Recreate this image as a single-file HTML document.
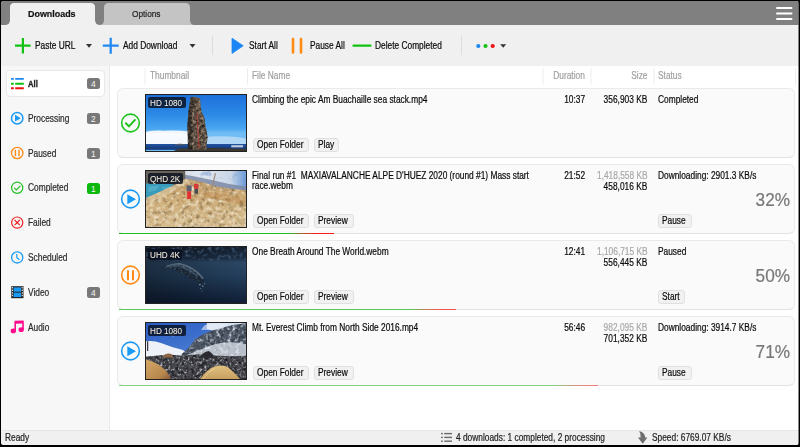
<!DOCTYPE html>
<html><head><meta charset="utf-8"><style>
*{margin:0;padding:0;box-sizing:border-box}
html,body{width:800px;height:447px;overflow:hidden;background:#000}
body{position:relative;font-family:"Liberation Sans",sans-serif}
.t{position:absolute;white-space:nowrap;-webkit-text-stroke-width:0.2px}
.a{position:absolute}
svg{position:absolute;overflow:visible}
.btn{position:absolute;height:14px;background:#f1f1f1;border:1px solid #e0e0e0;border-radius:3px}
.card{position:absolute;left:117px;width:678px;height:70px;background:#fafafa;border:1px solid #eaeaea;border-bottom-color:#e2e2e2;border-radius:6px}
.badge{position:absolute;left:87px;width:12.6px;height:11.2px;border-radius:2.5px;background:#787878;color:#f4f4f4;font-size:8.4px;line-height:12.4px;text-align:center}
</style></head><body>
<div class="a" style="left:1px;top:1px;width:797.5px;height:444px;background:#f0f0f0;border-radius:3px;overflow:hidden"></div>
<svg class="a" style="left:0;top:0" width="800" height="30" viewBox="0 0 800 30"><path d="M1,4 Q1,1 4,1 L795.5,1 Q798.5,1 798.5,4 L798.5,25 L1,25 Z" fill="#808080"/><path d="M5.2,25 Q10,25 10,20.2 L10,7.5 Q10,3 14.5,3 L90.5,3 Q95,3 95,7.5 L95,20.2 Q95,25 99.8,25 Z" fill="#c4c4c4"/><path d="M99.2,25 Q104,25 104,20.2 L104,7.5 Q104,3 108.5,3 L185.5,3 Q190,3 190,7.5 L190,20.2 Q190,25 194.8,25 Z" fill="#c4c4c4"/><path d="M5.2,25 Q10,25 10,20.2 L10,7.5 Q10,3 14.5,3 L90.5,3 Q95,3 95,7.5 L95,20.2 Q95,25 99.8,25 Z" fill="#f0f0f0"/><rect x="1" y="25" width="797.5" height="3" fill="#f0f0f0"/><line x1="777" y1="8" x2="791.5" y2="8" stroke="#fff" stroke-width="2" stroke-linecap="round"/><line x1="777" y1="13.5" x2="791.5" y2="13.5" stroke="#fff" stroke-width="2" stroke-linecap="round"/><line x1="777" y1="19" x2="791.5" y2="19" stroke="#fff" stroke-width="2" stroke-linecap="round"/></svg>
<div class="t" style="left:27.9px;transform-origin:0 50%;transform:scaleX(0.97);top:9.00px;font-size:9.2px;line-height:10px;color:#111;font-weight:bold;letter-spacing:0px;">Downloads</div>
<div class="t" style="left:132px;transform-origin:0 50%;transform:scaleX(0.86);top:8.00px;font-size:9.6px;line-height:11px;color:#222;font-weight:normal;letter-spacing:0px;">Options</div>
<svg class="a" style="left:0;top:0" width="800" height="70" viewBox="0 0 800 70"><path d="M15,45.7 H30.6 M22.9,38 V53.5" stroke="#13c113" stroke-width="2.2"/><path d="M86,44 L92,44 L89,47.8 Z" fill="#333"/><path d="M102.8,45.7 H118.7 M110.7,37.8 V53.7" stroke="#1e88f0" stroke-width="2.2"/><path d="M189.5,44 L195.5,44 L192.5,47.8 Z" fill="#333"/><line x1="212.5" y1="36" x2="212.5" y2="55" stroke="#dcdcdc" stroke-width="1"/><path d="M232,38.2 L243.2,45.8 L232,53.4 Z" fill="#1a86f5" stroke="#1a86f5" stroke-width="0.8" stroke-linejoin="round"/><path d="M293,39 V52.5 M301,39 V52.5" stroke="#ff8a14" stroke-width="2.6" stroke-linecap="round"/><line x1="353.5" y1="45.7" x2="370.5" y2="45.7" stroke="#13c113" stroke-width="2.2" stroke-linecap="round"/><line x1="461.5" y1="36" x2="461.5" y2="55" stroke="#dcdcdc" stroke-width="1"/><circle cx="478.3" cy="46" r="2.1" fill="#1e88f0"/><circle cx="485.5" cy="46" r="2.1" fill="#13c113"/><circle cx="492.7" cy="46" r="2.1" fill="#f01010"/><path d="M500.2,44.2 L506.2,44.2 L503.2,47.7 Z" fill="#333"/></svg>
<div class="t" style="left:35px;transform-origin:0 50%;transform:scaleX(0.835);top:40.00px;font-size:10px;line-height:11px;color:#0a0a0a;font-weight:normal;letter-spacing:0px;">Paste URL</div>
<div class="t" style="left:122.7px;transform-origin:0 50%;transform:scaleX(0.835);top:40.00px;font-size:10px;line-height:11px;color:#0a0a0a;font-weight:normal;letter-spacing:0px;">Add Download</div>
<div class="t" style="left:248.8px;transform-origin:0 50%;transform:scaleX(0.835);top:40.00px;font-size:10px;line-height:11px;color:#0a0a0a;font-weight:normal;letter-spacing:0px;">Start All</div>
<div class="t" style="left:309.7px;transform-origin:0 50%;transform:scaleX(0.835);top:40.00px;font-size:10px;line-height:11px;color:#0a0a0a;font-weight:normal;letter-spacing:0px;">Pause All</div>
<div class="t" style="left:374.5px;transform-origin:0 50%;transform:scaleX(0.835);top:40.00px;font-size:10px;line-height:11px;color:#0a0a0a;font-weight:normal;letter-spacing:0px;">Delete Completed</div>
<div class="a" style="left:798px;top:1px;width:1px;height:444px;background:rgba(0,0,0,0.45);z-index:5"></div>
<div class="a" style="left:1px;top:65.5px;width:109px;height:364.5px;background:#f7f7f7;border-right:1px solid #e9e9e9"></div>
<div class="a" style="left:110px;top:65.5px;width:688.5px;height:364.5px;background:#fff"></div>
<div class="a" style="left:1px;top:430px;width:797.5px;height:15px;background:#f0f0f0;border-top:1px solid #e6e6e6;border-radius:0 0 3px 3px"></div>
<div class="a" style="left:5.5px;top:70px;width:99px;height:27px;background:#fff;border:1px solid #e8e8e8;border-radius:4px"></div>
<div class="t" style="left:28px;transform-origin:0 50%;transform:scaleX(0.8);top:78.00px;font-size:9.6px;line-height:11px;color:#222;font-weight:bold;letter-spacing:0px;-webkit-text-stroke-width:0.35px">All</div>
<div class="t" style="left:28px;transform-origin:0 50%;transform:scaleX(0.835);top:113.00px;font-size:10px;line-height:11px;color:#2a2a2a;font-weight:normal;letter-spacing:0px;">Processing</div>
<div class="t" style="left:28px;transform-origin:0 50%;transform:scaleX(0.835);top:148.00px;font-size:10px;line-height:11px;color:#2a2a2a;font-weight:normal;letter-spacing:0px;">Paused</div>
<div class="t" style="left:28px;transform-origin:0 50%;transform:scaleX(0.835);top:182.00px;font-size:10px;line-height:11px;color:#2a2a2a;font-weight:normal;letter-spacing:0px;">Completed</div>
<div class="t" style="left:28px;transform-origin:0 50%;transform:scaleX(0.835);top:217.00px;font-size:10px;line-height:11px;color:#2a2a2a;font-weight:normal;letter-spacing:0px;">Failed</div>
<div class="t" style="left:28px;transform-origin:0 50%;transform:scaleX(0.835);top:252.00px;font-size:10px;line-height:11px;color:#2a2a2a;font-weight:normal;letter-spacing:0px;">Scheduled</div>
<div class="t" style="left:28px;transform-origin:0 50%;transform:scaleX(0.835);top:287.00px;font-size:10px;line-height:11px;color:#2a2a2a;font-weight:normal;letter-spacing:0px;">Video</div>
<div class="t" style="left:28px;transform-origin:0 50%;transform:scaleX(0.835);top:322.00px;font-size:10px;line-height:11px;color:#2a2a2a;font-weight:normal;letter-spacing:0px;">Audio</div>
<div class="badge" style="top:78.10px;background:#787878">4</div>
<div class="badge" style="top:112.90px;background:#787878">2</div>
<div class="badge" style="top:147.70px;background:#787878">1</div>
<div class="badge" style="top:182.50px;background:#0cb80c">1</div>
<div class="badge" style="top:286.90px;background:#787878">4</div>
<svg class="a" style="left:0;top:0" width="110" height="440" viewBox="0 0 110 440"><path d="M11,78.90 H13.8 M15.2,78.90 H23.8" stroke="#1e88f0" stroke-width="1.9"/><path d="M11,83.70 H13.8 M15.2,83.70 H23.8" stroke="#13c113" stroke-width="1.9"/><path d="M11,88.30 H13.8 M15.2,88.30 H23.8" stroke="#f01010" stroke-width="1.9"/><circle cx="17.2" cy="118.20" r="5.7" fill="none" stroke="#1a9af5" stroke-width="1.5"/><path d="M15,114.80 L20.8,118.20 L15,121.60 Z" fill="#1a9af5"/><circle cx="17.2" cy="153.00" r="5.7" fill="none" stroke="#ff8a14" stroke-width="1.3"/><path d="M15.4,149.80 V156.20 M19,149.80 V156.20" stroke="#ff8a14" stroke-width="1.4"/><circle cx="17.2" cy="187.80" r="5.6" fill="none" stroke="#22c022" stroke-width="1.2"/><path d="M14.2,187.80 L16.4,190.00 L20.4,185.80" fill="none" stroke="#22c022" stroke-width="1.2"/><circle cx="17.2" cy="222.60" r="5.6" fill="none" stroke="#f02020" stroke-width="1.2"/><path d="M14.6,220.00 L19.8,225.20 M19.8,220.00 L14.6,225.20" stroke="#f02020" stroke-width="1.2"/><circle cx="17.2" cy="257.40" r="5.6" fill="none" stroke="#1a9af5" stroke-width="1.3"/><path d="M16.8,253.90 V257.70 L19.5,259.80" fill="none" stroke="#1a9af5" stroke-width="1.2"/><rect x="11.2" y="286.20" width="12.3" height="12" fill="#222"/><rect x="13.6" y="287.40" width="7.5" height="4.3" fill="#1a9af5"/><rect x="13.6" y="292.70" width="7.5" height="4.3" fill="#1a9af5"/><rect x="11.8" y="287.00" width="1.2" height="1.4" fill="#ddd"/><rect x="21.7" y="287.00" width="1.2" height="1.4" fill="#ddd"/><rect x="11.8" y="289.60" width="1.2" height="1.4" fill="#ddd"/><rect x="21.7" y="289.60" width="1.2" height="1.4" fill="#ddd"/><rect x="11.8" y="292.20" width="1.2" height="1.4" fill="#ddd"/><rect x="21.7" y="292.20" width="1.2" height="1.4" fill="#ddd"/><rect x="11.8" y="294.80" width="1.2" height="1.4" fill="#ddd"/><rect x="21.7" y="294.80" width="1.2" height="1.4" fill="#ddd"/><path d="M14.4,321.40 Q14.4,320.80 15,320.80 L23.2,320.60 Q23.8,320.60 23.8,321.20 L23.8,329.60 L22.2,329.60 L22.2,323.60 L16,323.80 L16,330.80 L14.4,330.80 Z" fill="#ff0c8c"/><ellipse cx="13.3" cy="330.90" rx="2.7" ry="2.4" fill="#ff0c8c"/><ellipse cx="21.2" cy="329.70" rx="2.7" ry="2.4" fill="#ff0c8c"/></svg>
<svg class="a" style="left:0;top:0" width="800" height="100" viewBox="0 0 800 100"><line x1="145" y1="68" x2="145" y2="84.5" stroke="#ededed" stroke-width="1"/><line x1="247.5" y1="68" x2="247.5" y2="84.5" stroke="#ededed" stroke-width="1"/><line x1="543" y1="68" x2="543" y2="84.5" stroke="#ededed" stroke-width="1"/><line x1="591" y1="68" x2="591" y2="84.5" stroke="#ededed" stroke-width="1"/><line x1="654" y1="68" x2="654" y2="84.5" stroke="#ededed" stroke-width="1"/><line x1="795.5" y1="68" x2="795.5" y2="84.5" stroke="#ededed" stroke-width="1"/></svg>
<div class="t" style="left:149.5px;transform-origin:0 50%;transform:scaleX(0.835);top:70.00px;font-size:10px;line-height:11px;color:#a0a0a0;font-weight:normal;letter-spacing:0px;">Thumbnail</div>
<div class="t" style="left:252px;transform-origin:0 50%;transform:scaleX(0.835);top:70.00px;font-size:10px;line-height:11px;color:#a0a0a0;font-weight:normal;letter-spacing:0px;">File Name</div>
<div class="t" style="right:215.20000000000005px;text-align:right;transform-origin:100% 50%;transform:scaleX(0.835);top:70.00px;font-size:10px;line-height:11px;color:#a0a0a0;font-weight:normal;letter-spacing:0px;">Duration</div>
<div class="t" style="right:152.20000000000005px;text-align:right;transform-origin:100% 50%;transform:scaleX(0.835);top:70.00px;font-size:10px;line-height:11px;color:#a0a0a0;font-weight:normal;letter-spacing:0px;">Size</div>
<div class="t" style="left:657.7px;transform-origin:0 50%;transform:scaleX(0.835);top:70.00px;font-size:10px;line-height:11px;color:#a0a0a0;font-weight:normal;letter-spacing:0px;">Status</div>
<div class="card" style="top:88px"></div>
<svg class="a" style="left:0;top:0" width="800" height="447" viewBox="0 0 800 447"><circle cx="130.5" cy="123.0" r="8.85" fill="none" stroke="#1ec41e" stroke-width="1.6"/><path d="M125.3,122.8 L129.0,126.3 L135.4,119.3" fill="none" stroke="#1ec41e" stroke-width="2"/></svg>
<div class="a" style="left:145px;top:94px;width:102px;height:58px;background:#222;overflow:hidden"><div class="a" style="left:1px;top:1px;width:100px;height:56px;overflow:hidden"><svg width="100" height="56" viewBox="0 0 102 58" preserveAspectRatio="none" style="position:absolute;left:0;top:0"><defs>
<linearGradient id="s1" x1="0" y1="0" x2="0" y2="1"><stop offset="0" stop-color="#1e70dc"/><stop offset="0.35" stop-color="#2c8ae6"/><stop offset="0.6" stop-color="#4aa6f0"/><stop offset="0.68" stop-color="#70bcf4"/></linearGradient>
<linearGradient id="c1" x1="0" y1="0" x2="0" y2="1"><stop offset="0" stop-color="#f4f8ff"/><stop offset="1" stop-color="#d4e6f6"/></linearGradient>
<linearGradient id="r1" x1="0" y1="0" x2="1" y2="0"><stop offset="0" stop-color="#3a322c"/><stop offset="0.55" stop-color="#6a5a4c"/><stop offset="1" stop-color="#4a4038"/></linearGradient>
<filter id="n1" x="0" y="0" width="100%" height="100%" color-interpolation-filters="sRGB"><feTurbulence type="fractalNoise" baseFrequency="0.3" numOctaves="2" seed="5" result="t"/><feColorMatrix in="t" type="matrix" values="0 0 0 0 0.7 0 0 0 0 0.62 0 0 0 0 0.52 2.6 0 0 0 -1.15" result="c"/><feComposite in="c" in2="SourceGraphic" operator="in"/></filter><filter id="n1b" x="0" y="0" width="100%" height="100%" color-interpolation-filters="sRGB"><feTurbulence type="fractalNoise" baseFrequency="0.35" numOctaves="2" seed="9" result="t"/><feColorMatrix in="t" type="matrix" values="0 0 0 0 0.08 0 0 0 0 0.07 0 0 0 0 0.06 2.4 0 0 0 -1.1" result="c"/><feComposite in="c" in2="SourceGraphic" operator="in"/></filter>
</defs>
<rect width="102" height="58" fill="url(#s1)"/>
<path d="M0,38 Q8,36.5 18,37 Q30,36 46,38 L46,51 L0,51 Z" fill="url(#c1)"/>
<path d="M0,40 Q20,38.5 46,40.5 L46,50.8 L0,50.8 Z" fill="#fbfdff" opacity="0.8"/>
<path d="M56,44 Q70,42 84,43 Q95,43.5 102,45 L102,51 L56,51 Z" fill="#dce9f6" opacity="0.6"/>
<rect y="50.8" width="102" height="6" fill="#1e4c98"/>
<rect y="53.5" width="102" height="3" fill="#18407e"/>
<path d="M28,52 Q32,50.3 36,50.6 Q39,51 42,52 Z" fill="#505a66"/>
<path d="M28,58 L34,55.5 L70,55 L102,56 L102,58 Z" fill="#3e3832"/>
<path d="M45.6,2.1 Q50,1.3 55.2,3.5 Q55.4,8 55.9,11.8 Q56.3,15.5 57.2,18.7 Q59.5,22 60,25.7 Q60.2,29 60.7,32.7 Q62.5,38 62.7,43.8 Q62.6,47 62,50.8 L61.6,56.5 L42.9,56.5 Q42.6,48 42.6,39.7 Q42,36 42.2,32.7 Q42.6,25 43.2,18.7 Q43.5,15 44,11.8 Q44.5,9 45.6,2.1 Z" fill="url(#r1)"/>
<path d="M45.6,2.1 Q50,1.3 55.2,3.5 Q55.4,8 55.9,11.8 Q56.3,15.5 57.2,18.7 Q59.5,22 60,25.7 Q60.2,29 60.7,32.7 Q62.5,38 62.7,43.8 Q62.6,47 62,50.8 L61.6,56.5 L42.9,56.5 Q42.6,48 42.6,39.7 Q42,36 42.2,32.7 Q42.6,25 43.2,18.7 Q43.5,15 44,11.8 Q44.5,9 45.6,2.1 Z" fill="#000" filter="url(#n1)"/>
<path d="M45.6,2.1 Q50,1.3 55.2,3.5 Q55.4,8 55.9,11.8 Q56.3,15.5 57.2,18.7 Q59.5,22 60,25.7 Q60.2,29 60.7,32.7 Q62.5,38 62.7,43.8 Q62.6,47 62,50.8 L61.6,56.5 L42.9,56.5 Q42.6,48 42.6,39.7 Q42,36 42.2,32.7 Q42.6,25 43.2,18.7 Q43.5,15 44,11.8 Q44.5,9 45.6,2.1 Z" fill="#000" filter="url(#n1b)"/>
<path d="M52.4,18.7 Q51.5,24 53,29 Q52,34 53.5,39 Q52.8,45 54,49 L53.9,55" fill="none" stroke="#c83434" stroke-width="0.8"/><path d="M42.9,56.5 L42.6,39.7 L42.2,32.7 L43.2,18.7 L45.6,2.1 L49,2 L47,20 L46,40 L47,56.5 Z" fill="#1a1614" opacity="0.35"/>
<rect x="87" y="52" width="12" height="2.2" fill="#e8eef8" opacity="0.8"/>
</svg></div></div>
<div class="a" style="left:148.1px;top:97.10px;width:37.5px;height:10.6px;background:rgba(10,16,32,0.82);border-radius:2px"></div>
<div class="t" style="left:149.6px;transform-origin:0 50%;transform:scaleX(0.84);top:97.00px;font-size:9.7px;line-height:11px;color:#f2ecdc;font-weight:normal;letter-spacing:0px;-webkit-text-stroke-width:0.05px">HD 1080</div>
<div class="t" style="left:252px;transform-origin:0 50%;transform:scaleX(0.835);top:94.00px;font-size:10px;line-height:11px;color:#0a0a0a;font-weight:normal;letter-spacing:0px;">Climbing the epic Am Buachaille sea stack.mp4</div>
<div class="t" style="right:215px;text-align:right;transform-origin:100% 50%;transform:scaleX(0.835);top:94.00px;font-size:10px;line-height:11px;color:#0a0a0a;font-weight:normal;letter-spacing:0px;">10:37</div>
<div class="t" style="right:152.39999999999998px;text-align:right;transform-origin:100% 50%;transform:scaleX(0.835);top:94.00px;font-size:10px;line-height:11px;color:#0a0a0a;font-weight:normal;letter-spacing:0px;">356,903 KB</div>
<div class="t" style="left:657.7px;transform-origin:0 50%;transform:scaleX(0.835);top:94.00px;font-size:10px;line-height:11px;color:#0a0a0a;font-weight:normal;letter-spacing:0px;">Completed</div>
<div class="btn" style="left:252.5px;top:137.50px;width:56px"></div>
<div class="t" style="left:256.9px;transform-origin:0 50%;transform:scaleX(0.835);top:139.00px;font-size:10px;line-height:11px;color:#0a0a0a;font-weight:normal;letter-spacing:0px;">Open Folder</div>
<div class="btn" style="left:314.2px;top:137.50px;width:24.4px"></div>
<div class="t" style="left:318.3px;transform-origin:0 50%;transform:scaleX(0.835);top:139.00px;font-size:10px;line-height:11px;color:#0a0a0a;font-weight:normal;letter-spacing:0px;">Play</div>
<div class="card" style="top:164px"></div>
<svg class="a" style="left:0;top:0" width="800" height="447" viewBox="0 0 800 447"><circle cx="130.5" cy="199.0" r="8.85" fill="none" stroke="#1a9af5" stroke-width="1.6"/><path d="M127.3,194.3 L136.0,199.3 L127.3,204.2 Z" fill="#1a9af5"/></svg>
<div class="a" style="left:145px;top:170px;width:102px;height:58px;background:#222;overflow:hidden"><div class="a" style="left:1px;top:1px;width:100px;height:56px;overflow:hidden"><svg width="100" height="56" viewBox="0 0 102 58" preserveAspectRatio="none" style="position:absolute;left:0;top:0"><defs>
<linearGradient id="s2" x1="0" y1="0" x2="1" y2="0"><stop offset="0" stop-color="#c0ccd8"/><stop offset="0.55" stop-color="#e2e8f0"/><stop offset="0.85" stop-color="#c8d6e6"/><stop offset="1" stop-color="#6a9ad8"/></linearGradient>
<linearGradient id="g2" x1="0" y1="0" x2="0" y2="1"><stop offset="0" stop-color="#b89464"/><stop offset="0.35" stop-color="#ccaa74"/><stop offset="1" stop-color="#d6bc90"/></linearGradient>
<filter id="n2" x="0" y="0" width="100%" height="100%" color-interpolation-filters="sRGB"><feTurbulence type="fractalNoise" baseFrequency="0.22" numOctaves="2" seed="3" result="t"/><feColorMatrix in="t" type="matrix" values="0 0 0 0 0.48 0 0 0 0 0.38 0 0 0 0 0.24 2.4 0 0 0 -1.25" result="c"/><feComposite in="c" in2="SourceGraphic" operator="in"/></filter><filter id="n2b" x="0" y="0" width="100%" height="100%" color-interpolation-filters="sRGB"><feTurbulence type="fractalNoise" baseFrequency="0.24" numOctaves="2" seed="11" result="t"/><feColorMatrix in="t" type="matrix" values="0 0 0 0 0.93 0 0 0 0 0.88 0 0 0 0 0.78 2.6 0 0 0 -1.2" result="c"/><feComposite in="c" in2="SourceGraphic" operator="in"/></filter><filter id="n2c" x="0" y="0" width="100%" height="100%" color-interpolation-filters="sRGB"><feTurbulence type="fractalNoise" baseFrequency="0.15" numOctaves="2" seed="17" result="t"/><feColorMatrix in="t" type="matrix" values="0 0 0 0 0.45 0 0 0 0 0.6 0 0 0 0 0.8 2.2 0 0 0 -1.2" result="c"/><feComposite in="c" in2="SourceGraphic" operator="in"/></filter><filter id="n2d" x="0" y="0" width="100%" height="100%" color-interpolation-filters="sRGB"><feTurbulence type="fractalNoise" baseFrequency="0.12" numOctaves="2" seed="23" result="t"/><feColorMatrix in="t" type="matrix" values="0 0 0 0 0.55 0 0 0 0 0.5 0 0 0 0 0.32 2.2 0 0 0 -1.3" result="c"/><feComposite in="c" in2="SourceGraphic" operator="in"/></filter>
</defs>
<rect width="102" height="58" fill="url(#g2)"/>
<rect width="102" height="24" fill="url(#s2)"/>
<rect width="102" height="24" fill="#000" filter="url(#n2c)"/>
<path d="M34,3 Q50,5 66,9 Q84,14 102,16 L102,24 L34,20 Z" fill="#7e8aa6" opacity="0.85"/>
<path d="M0,0 L40,0 L40,14 L0,16 Z" fill="#68645c"/>
<path d="M0,13 Q10,12.5 26,13.5 Q30,15 32,17 Q20,24 8,27 L0,29 Z" fill="#3a9cbc"/>
<path d="M3,16 L14,15 L10,20 L2,22 Z M16,17 L24,16 L20,21 Z" fill="#5ab4cc" opacity="0.7"/>
<path d="M0,28 Q14,22 30,14 Q36,9 42,8 Q60,12 72,16 Q88,19 102,20 L102,58 L0,58 Z" fill="url(#g2)"/>
<path d="M0,28 Q14,22 30,14 Q36,9 42,8 Q60,12 72,16 Q88,19 102,20 L102,58 L0,58 Z" fill="#000" filter="url(#n2d)" opacity="0.6"/>
<path d="M0,28 Q14,22 30,14 Q36,9 42,8 Q60,12 72,16 Q88,19 102,20 L102,58 L0,58 Z" fill="#000" filter="url(#n2)"/>
<path d="M0,28 Q14,22 30,14 Q36,9 42,8 Q60,12 72,16 Q88,19 102,20 L102,58 L0,58 Z" fill="#000" filter="url(#n2b)"/>
<path d="M0,28 Q14,22 30,14 Q36,9 42,8 L44,12 Q34,16 26,22 Q12,30 0,34 Z" fill="#e2d2b0" opacity="0.5"/>
<path d="M60,21 Q80,23 102,28 L102,36 Q80,31 58,26 Z" fill="#b8844c" opacity="0.4"/>
<rect x="68.5" y="2" width="1.2" height="17" fill="#9a8a78" transform="rotate(12 69 10)"/>
<rect x="41.5" y="15" width="5" height="6" fill="#5a6070"/>
<rect x="42" y="21" width="4" height="8" fill="#e03030"/>
<rect x="49" y="13.5" width="4.5" height="5" fill="#d83838"/>
<rect x="49.5" y="18.5" width="3.5" height="5" fill="#484850"/>
</svg></div></div>
<div class="a" style="left:148.1px;top:173.10px;width:34.5px;height:10.6px;background:rgba(10,16,32,0.82);border-radius:2px"></div>
<div class="t" style="left:149.6px;transform-origin:0 50%;transform:scaleX(0.84);top:173.00px;font-size:9.7px;line-height:11px;color:#f2ecdc;font-weight:normal;letter-spacing:0px;-webkit-text-stroke-width:0.05px">QHD 2K</div>
<div class="t" style="left:252px;transform-origin:0 50%;transform:scaleX(0.835);top:170.00px;font-size:10px;line-height:11px;color:#0a0a0a;font-weight:normal;letter-spacing:0px;">Final run #1&nbsp; MAXIAVALANCHE ALPE D'HUEZ 2020 (round #1) Mass start</div>
<div class="t" style="left:252px;transform-origin:0 50%;transform:scaleX(0.835);top:180.00px;font-size:10px;line-height:11px;color:#0a0a0a;font-weight:normal;letter-spacing:0px;">race.webm</div>
<div class="t" style="right:215px;text-align:right;transform-origin:100% 50%;transform:scaleX(0.835);top:170.00px;font-size:10px;line-height:11px;color:#0a0a0a;font-weight:normal;letter-spacing:0px;">21:52</div>
<div class="t" style="right:152.39999999999998px;text-align:right;transform-origin:100% 50%;transform:scaleX(0.835);top:170.00px;font-size:10px;line-height:11px;color:#a8a8a8;font-weight:normal;letter-spacing:0px;">1,418,558 KB</div>
<div class="t" style="right:152.39999999999998px;text-align:right;transform-origin:100% 50%;transform:scaleX(0.835);top:181.00px;font-size:10px;line-height:11px;color:#0a0a0a;font-weight:normal;letter-spacing:0px;">458,016 KB</div>
<div class="t" style="left:657.7px;transform-origin:0 50%;transform:scaleX(0.835);top:170.00px;font-size:10px;line-height:11px;color:#0a0a0a;font-weight:normal;letter-spacing:0px;">Downloading: 2901.3 KB/s</div>
<div class="btn" style="left:252.5px;top:213.50px;width:56px"></div>
<div class="t" style="left:256.9px;transform-origin:0 50%;transform:scaleX(0.835);top:215.00px;font-size:10px;line-height:11px;color:#0a0a0a;font-weight:normal;letter-spacing:0px;">Open Folder</div>
<div class="btn" style="left:314.2px;top:213.50px;width:40px"></div>
<div class="t" style="left:318.3px;transform-origin:0 50%;transform:scaleX(0.835);top:215.00px;font-size:10px;line-height:11px;color:#0a0a0a;font-weight:normal;letter-spacing:0px;">Preview</div>
<div class="btn" style="left:657.7px;top:213.50px;width:34.7px"></div>
<div class="t" style="left:661.8px;transform-origin:0 50%;transform:scaleX(0.835);top:215.00px;font-size:10px;line-height:11px;color:#0a0a0a;font-weight:normal;letter-spacing:0px;">Pause</div>
<div class="t" style="right:9.700000000000045px;text-align:right;transform-origin:100% 50%;transform:scaleX(0.955);top:190.00px;font-size:18px;line-height:20px;color:#777;font-weight:normal;letter-spacing:0px;">32%</div>
<div class="a" style="left:119px;top:232.80px;width:215.14px;height:1.7px;opacity:1.0;background:linear-gradient(to left,#ff1a1a 0,#ff1a1a 16px,#b05a2a 31.0px,#20c020 46px,#20c020 100%)"></div>
<div class="card" style="top:240px"></div>
<svg class="a" style="left:0;top:0" width="800" height="447" viewBox="0 0 800 447"><circle cx="130.5" cy="275.0" r="8.85" fill="none" stroke="#ff8a14" stroke-width="1.6"/><path d="M128.0,270.3 V280.2 M133.0,270.3 V280.2" stroke="#ff8a14" stroke-width="2"/></svg>
<div class="a" style="left:145px;top:246px;width:102px;height:58px;background:#222;overflow:hidden"><div class="a" style="left:1px;top:1px;width:100px;height:56px;overflow:hidden"><svg width="100" height="56" viewBox="0 0 102 58" preserveAspectRatio="none" style="position:absolute;left:0;top:0"><defs>
<linearGradient id="w3" x1="0" y1="0" x2="0" y2="1"><stop offset="0" stop-color="#142030"/><stop offset="0.2" stop-color="#1c2e44"/><stop offset="0.27" stop-color="#2c4866"/><stop offset="0.5" stop-color="#24405e"/><stop offset="1" stop-color="#101e36"/></linearGradient>
<linearGradient id="wl3" x1="0" y1="0" x2="1" y2="0"><stop offset="0" stop-color="#000" stop-opacity="0.35"/><stop offset="1" stop-color="#000" stop-opacity="0"/></linearGradient>
<filter id="n3" x="0" y="0" width="100%" height="100%" color-interpolation-filters="sRGB"><feTurbulence type="fractalNoise" baseFrequency="0.25" numOctaves="2" seed="7" result="t"/><feColorMatrix in="t" type="matrix" values="0 0 0 0 0.3 0 0 0 0 0.42 0 0 0 0 0.56 2.2 0 0 0 -1.1" result="c"/><feComposite in="c" in2="SourceGraphic" operator="in"/></filter><filter id="n3b" x="0" y="0" width="100%" height="100%" color-interpolation-filters="sRGB"><feTurbulence type="fractalNoise" baseFrequency="0.45" numOctaves="2" seed="13" result="t"/><feColorMatrix in="t" type="matrix" values="0 0 0 0 0.6 0 0 0 0 0.72 0 0 0 0 0.82 2.4 0 0 0 -1.25" result="c"/><feComposite in="c" in2="SourceGraphic" operator="in"/></filter>
</defs>
<rect width="102" height="58" fill="url(#w3)"/>
<rect width="102" height="58" fill="url(#wl3)"/>
<rect width="102" height="14" fill="#000" filter="url(#n3)"/>
<path d="M15.5,20.8 L22,19.8 Q28,16 34,16.5 Q44,19 51,24.5 Q58,30 59,34 Q58.5,37.5 55,37 Q46,33.5 39,29 Q31,24 24,21.5 L16,22 Z" fill="#1a2634"/>
<path d="M21,20.2 Q28,17 34,17.4 Q44,19.8 51,25.2 Q56.5,29.8 58,33" fill="none" stroke="#7a94a8" stroke-width="1.8" opacity="0.6"/>
<path d="M24,20.5 Q31,18.5 38,21 Q46,25 53,30" fill="none" stroke="#34485a" stroke-width="2.4"/>
<path d="M15.5,20.8 L22,19.8 Q28,16 34,16.5 Q44,19 51,24.5 Q58,30 59,34 Q58.5,37.5 55,37 Q46,33.5 39,29 Q31,24 24,21.5 L16,22 Z" fill="#000" filter="url(#n3b)" opacity="0.4"/>
<circle cx="55" cy="39" r="0.6" fill="#c0d0dc"/><circle cx="58" cy="40.5" r="0.6" fill="#c0d0dc"/><circle cx="56" cy="43" r="0.5" fill="#a0b4c4"/><circle cx="60" cy="38" r="0.5" fill="#c0d0dc"/><circle cx="57" cy="45.5" r="0.5" fill="#8aa0b4"/>
<circle cx="36" cy="2" r="0.5" fill="#b0c4d4"/><circle cx="44" cy="3" r="0.5" fill="#b0c4d4"/><circle cx="50" cy="1.5" r="0.4" fill="#b0c4d4"/><circle cx="54" cy="5" r="0.5" fill="#b0c4d4"/>
</svg></div></div>
<div class="a" style="left:148.1px;top:249.10px;width:34px;height:10.6px;background:rgba(10,16,32,0.82);border-radius:2px"></div>
<div class="t" style="left:149.6px;transform-origin:0 50%;transform:scaleX(0.84);top:249.00px;font-size:9.7px;line-height:11px;color:#f2ecdc;font-weight:normal;letter-spacing:0px;-webkit-text-stroke-width:0.05px">UHD 4K</div>
<div class="t" style="left:252px;transform-origin:0 50%;transform:scaleX(0.835);top:246.00px;font-size:10px;line-height:11px;color:#0a0a0a;font-weight:normal;letter-spacing:0px;">One Breath Around The World.webm</div>
<div class="t" style="right:215px;text-align:right;transform-origin:100% 50%;transform:scaleX(0.835);top:246.00px;font-size:10px;line-height:11px;color:#0a0a0a;font-weight:normal;letter-spacing:0px;">12:41</div>
<div class="t" style="right:152.39999999999998px;text-align:right;transform-origin:100% 50%;transform:scaleX(0.835);top:246.00px;font-size:10px;line-height:11px;color:#a8a8a8;font-weight:normal;letter-spacing:0px;">1,106,715 KB</div>
<div class="t" style="right:152.39999999999998px;text-align:right;transform-origin:100% 50%;transform:scaleX(0.835);top:257.00px;font-size:10px;line-height:11px;color:#0a0a0a;font-weight:normal;letter-spacing:0px;">556,445 KB</div>
<div class="t" style="left:657.7px;transform-origin:0 50%;transform:scaleX(0.835);top:246.00px;font-size:10px;line-height:11px;color:#0a0a0a;font-weight:normal;letter-spacing:0px;">Paused</div>
<div class="btn" style="left:252.5px;top:289.50px;width:56px"></div>
<div class="t" style="left:256.9px;transform-origin:0 50%;transform:scaleX(0.835);top:291.00px;font-size:10px;line-height:11px;color:#0a0a0a;font-weight:normal;letter-spacing:0px;">Open Folder</div>
<div class="btn" style="left:314.2px;top:289.50px;width:40px"></div>
<div class="t" style="left:318.3px;transform-origin:0 50%;transform:scaleX(0.835);top:291.00px;font-size:10px;line-height:11px;color:#0a0a0a;font-weight:normal;letter-spacing:0px;">Preview</div>
<div class="btn" style="left:657.7px;top:289.50px;width:27.5px"></div>
<div class="t" style="left:661.8px;transform-origin:0 50%;transform:scaleX(0.835);top:291.00px;font-size:10px;line-height:11px;color:#0a0a0a;font-weight:normal;letter-spacing:0px;">Start</div>
<div class="t" style="right:9.700000000000045px;text-align:right;transform-origin:100% 50%;transform:scaleX(0.955);top:266.00px;font-size:18px;line-height:20px;color:#777;font-weight:normal;letter-spacing:0px;">50%</div>
<div class="a" style="left:119px;top:308.80px;width:337.00px;height:1.7px;opacity:0.72;background:linear-gradient(to left,#ff1a1a 0,#ff1a1a 16px,#b05a2a 31.0px,#20c020 46px,#20c020 100%)"></div>
<div class="card" style="top:316px"></div>
<svg class="a" style="left:0;top:0" width="800" height="447" viewBox="0 0 800 447"><circle cx="130.5" cy="351.0" r="8.85" fill="none" stroke="#1a9af5" stroke-width="1.6"/><path d="M127.3,346.3 L136.0,351.3 L127.3,356.2 Z" fill="#1a9af5"/></svg>
<div class="a" style="left:145px;top:322px;width:102px;height:58px;background:#222;overflow:hidden"><div class="a" style="left:1px;top:1px;width:100px;height:56px;overflow:hidden"><svg width="100" height="56" viewBox="0 0 102 58" preserveAspectRatio="none" style="position:absolute;left:0;top:0"><defs>
<linearGradient id="s4" x1="0" y1="0" x2="0.5" y2="1"><stop offset="0" stop-color="#2a5cc4"/><stop offset="1" stop-color="#5a8ed8"/></linearGradient>
<linearGradient id="t4" x1="0" y1="0" x2="1" y2="1"><stop offset="0" stop-color="#d4a868"/><stop offset="0.7" stop-color="#b8884c"/><stop offset="1" stop-color="#8a5a3a"/></linearGradient>
<linearGradient id="t4b" x1="0" y1="0" x2="0" y2="1"><stop offset="0" stop-color="#e0c080"/><stop offset="1" stop-color="#c8a060"/></linearGradient>
<filter id="n4" x="0" y="0" width="100%" height="100%" color-interpolation-filters="sRGB"><feTurbulence type="fractalNoise" baseFrequency="0.4" numOctaves="2" seed="21" result="t"/><feColorMatrix in="t" type="matrix" values="0 0 0 0 0.85 0 0 0 0 0.87 0 0 0 0 0.9 2.6 0 0 0 -1.3" result="c"/><feComposite in="c" in2="SourceGraphic" operator="in"/></filter><filter id="n4b" x="0" y="0" width="100%" height="100%" color-interpolation-filters="sRGB"><feTurbulence type="fractalNoise" baseFrequency="0.3" numOctaves="2" seed="4" result="t"/><feColorMatrix in="t" type="matrix" values="0 0 0 0 0.06 0 0 0 0 0.06 0 0 0 0 0.08 2.4 0 0 0 -1.05" result="c"/><feComposite in="c" in2="SourceGraphic" operator="in"/></filter><filter id="n4c" x="0" y="0" width="100%" height="100%" color-interpolation-filters="sRGB"><feTurbulence type="fractalNoise" baseFrequency="0.25" numOctaves="2" seed="8" result="t"/><feColorMatrix in="t" type="matrix" values="0 0 0 0 0.93 0 0 0 0 0.95 0 0 0 0 0.98 2.6 0 0 0 -1.3" result="c"/><feComposite in="c" in2="SourceGraphic" operator="in"/></filter><filter id="n4d" x="0" y="0" width="100%" height="100%" color-interpolation-filters="sRGB"><feTurbulence type="fractalNoise" baseFrequency="0.3" numOctaves="2" seed="31" result="t"/><feColorMatrix in="t" type="matrix" values="0 0 0 0 0.15 0 0 0 0 0.17 0 0 0 0 0.22 2.4 0 0 0 -1.1" result="c"/><feComposite in="c" in2="SourceGraphic" operator="in"/></filter>
</defs>
<rect width="102" height="58" fill="url(#s4)"/>
<path d="M62,0 L102,0 L102,2 Q90,4 80,8 Q70,10 62,6 Z" fill="#e8eef8" opacity="0.9"/><path d="M22,12 Q26,10 30,12 L28,14 Z" fill="#d8e4f4" opacity="0.7"/>
<path d="M0,19 Q8,18 16,21 Q26,25 34,27 Q42,29 42,33 L42,38 L0,38 Z" fill="#eef2f8"/>
<rect x="1" y="19" width="1.3" height="10" fill="#3a3a40"/>
<path d="M36,33 Q44,26 50,17 Q60,10 70,7 Q80,4 90,1.7 L102,0.3 L102,38 L36,38 Z" fill="#4e5866"/>
<path d="M36,33 Q44,26 50,17 Q60,10 70,7 Q80,4 90,1.7 L102,0.3 L102,38 L36,38 Z" fill="#000" filter="url(#n4d)"/>
<path d="M36,33 Q44,26 50,17 Q60,10 70,7 Q80,4 90,1.7 L102,0.3 L102,38 L36,38 Z" fill="#000" filter="url(#n4c)"/>
<path d="M40,34 Q56,27 70,22 Q86,18 102,22 L102,36 L40,37 Z" fill="#e8eef6" opacity="0.7"/><path d="M60,2 Q72,-1 84,1 L78,6 Q68,8 56,7 Z" fill="#e8eef6" opacity="0.6"/>
<path d="M0,35 Q10,34 20,33 Q30,33 38,34 Q50,32 60,33 Q80,35 102,34 L102,58 L0,58 Z" fill="#46464c"/>
<path d="M0,35 Q10,34 20,33 Q30,33 38,34 Q50,32 60,33 Q80,35 102,34 L102,58 L0,58 Z" fill="#000" filter="url(#n4)"/>
<path d="M0,35 Q10,34 20,33 Q30,33 38,34 Q50,32 60,33 Q80,35 102,34 L102,58 L0,58 Z" fill="#000" filter="url(#n4b)"/>
<path d="M54,36 Q58,30 64,29 Q68,31 70,36 Z" fill="#2a2a30"/>
<path d="M16.5,35.5 Q21,29.5 27,33 L28,36 Z" fill="#8a6444"/>
<path d="M0,37.5 Q12,41 20,49 Q24,54 25.5,58 L0,58 Z" fill="url(#t4)"/>
<path d="M55,58 Q62,48 70,45 Q78,42.5 84,46 Q91,52 96,58 Z" fill="url(#t4b)"/>
<path d="M58,58 Q64,50 70,47" fill="none" stroke="#f0dca8" stroke-width="1" opacity="0.7"/>
</svg></div></div>
<div class="a" style="left:148.1px;top:325.10px;width:37.5px;height:10.6px;background:rgba(10,16,32,0.82);border-radius:2px"></div>
<div class="t" style="left:149.6px;transform-origin:0 50%;transform:scaleX(0.84);top:325.00px;font-size:9.7px;line-height:11px;color:#f2ecdc;font-weight:normal;letter-spacing:0px;-webkit-text-stroke-width:0.05px">HD 1080</div>
<div class="t" style="left:252px;transform-origin:0 50%;transform:scaleX(0.835);top:322.00px;font-size:10px;line-height:11px;color:#0a0a0a;font-weight:normal;letter-spacing:0px;">Mt. Everest Climb from North Side 2016.mp4</div>
<div class="t" style="right:215px;text-align:right;transform-origin:100% 50%;transform:scaleX(0.835);top:322.00px;font-size:10px;line-height:11px;color:#0a0a0a;font-weight:normal;letter-spacing:0px;">56:46</div>
<div class="t" style="right:152.39999999999998px;text-align:right;transform-origin:100% 50%;transform:scaleX(0.835);top:322.00px;font-size:10px;line-height:11px;color:#a8a8a8;font-weight:normal;letter-spacing:0px;">982,095 KB</div>
<div class="t" style="right:152.39999999999998px;text-align:right;transform-origin:100% 50%;transform:scaleX(0.835);top:333.00px;font-size:10px;line-height:11px;color:#0a0a0a;font-weight:normal;letter-spacing:0px;">701,352 KB</div>
<div class="t" style="left:657.7px;transform-origin:0 50%;transform:scaleX(0.835);top:322.00px;font-size:10px;line-height:11px;color:#0a0a0a;font-weight:normal;letter-spacing:0px;">Downloading: 3914.7 KB/s</div>
<div class="btn" style="left:252.5px;top:365.50px;width:56px"></div>
<div class="t" style="left:256.9px;transform-origin:0 50%;transform:scaleX(0.835);top:367.00px;font-size:10px;line-height:11px;color:#0a0a0a;font-weight:normal;letter-spacing:0px;">Open Folder</div>
<div class="btn" style="left:314.2px;top:365.50px;width:40px"></div>
<div class="t" style="left:318.3px;transform-origin:0 50%;transform:scaleX(0.835);top:367.00px;font-size:10px;line-height:11px;color:#0a0a0a;font-weight:normal;letter-spacing:0px;">Preview</div>
<div class="btn" style="left:657.7px;top:365.50px;width:34.7px"></div>
<div class="t" style="left:661.8px;transform-origin:0 50%;transform:scaleX(0.835);top:367.00px;font-size:10px;line-height:11px;color:#0a0a0a;font-weight:normal;letter-spacing:0px;">Pause</div>
<div class="t" style="right:9.700000000000045px;text-align:right;transform-origin:100% 50%;transform:scaleX(0.955);top:342.00px;font-size:18px;line-height:20px;color:#777;font-weight:normal;letter-spacing:0px;">71%</div>
<div class="a" style="left:119px;top:384.80px;width:479.17px;height:1.7px;opacity:0.5;background:linear-gradient(to left,#ff1a1a 0,#ff1a1a 7px,#b05a2a 26.5px,#20c020 46px,#20c020 100%)"></div>
<div class="t" style="left:4.5px;transform-origin:0 50%;transform:scaleX(0.835);top:432.00px;font-size:10px;line-height:11px;color:#222;font-weight:normal;letter-spacing:0px;">Ready</div>
<svg class="a" style="left:0;top:0" width="800" height="447" viewBox="0 0 800 447"><rect x="441" y="432.9" width="1.8" height="1.4" fill="#6a6a6a"/><rect x="444.2" y="432.9" width="7.8" height="1.4" fill="#6a6a6a"/><rect x="441" y="436.7" width="1.8" height="1.4" fill="#6a6a6a"/><rect x="444.2" y="436.7" width="7.8" height="1.4" fill="#6a6a6a"/><rect x="441" y="440.5" width="1.8" height="1.4" fill="#6a6a6a"/><rect x="444.2" y="440.5" width="7.8" height="1.4" fill="#6a6a6a"/><path d="M639.2,431 Q645.2,432.8 645.2,437.6 L647.4,437.6 L642.7,443.8 L638,437.6 L640.6,437.6 Q641,434.2 639.2,431 Z" fill="#6e6e6e"/></svg>
<div class="t" style="left:456px;transform-origin:0 50%;transform:scaleX(0.835);top:432.00px;font-size:10px;line-height:11px;color:#222;font-weight:normal;letter-spacing:0px;">4 downloads: 1 completed, 2 processing</div>
<div class="t" style="left:651.6px;transform-origin:0 50%;transform:scaleX(0.835);top:432.00px;font-size:10px;line-height:11px;color:#222;font-weight:normal;letter-spacing:0px;">Speed: 6769.07 KB/s</div>
</body></html>
